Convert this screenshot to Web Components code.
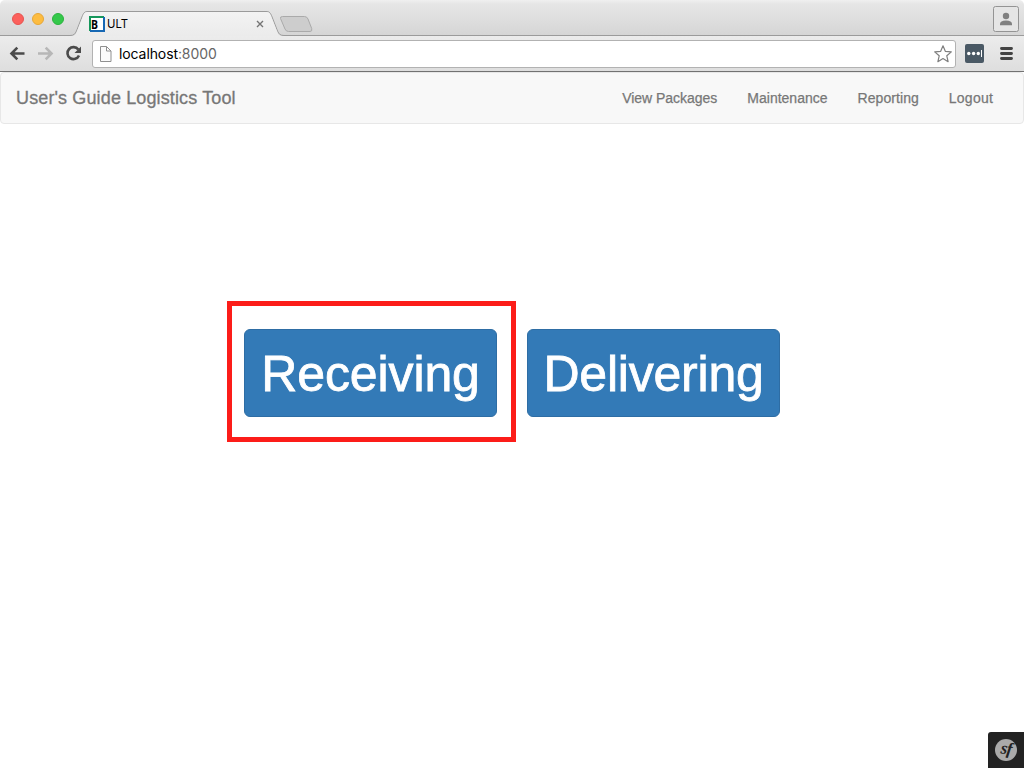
<!DOCTYPE html>
<html lang="en">
<head>
<meta charset="utf-8">
<title>ULT</title>
<style>
html,body{margin:0;height:100%;overflow:hidden;background:#fff}
body{font-family:"Liberation Sans",Arial,sans-serif}
</style>
</head>
<body>
<browser-window>
  <browser-tabs slot="chrome">ULT</browser-tabs>
  <browser-toolbar slot="chrome"><span slot="host">localhost</span><span slot="port">:8000</span></browser-toolbar>
  <site-navbar>
    <span slot="brand">User's Guide Logistics Tool</span>
    <nav-item style="letter-spacing:-.02px">View Packages</nav-item>
    <nav-item>Maintenance</nav-item>
    <nav-item style="letter-spacing:.07px">Reporting</nav-item>
    <nav-item style="letter-spacing:.22px">Logout</nav-item>
  </site-navbar>
  <action-row>
    <action-button highlighted style="--track:-.1px">Receiving</action-button>
    <action-button style="--track:-.22px">Delivering</action-button>
  </action-row>
  <debug-badge slot="overlay">sf</debug-badge>
</browser-window>
<script>
function define(name, markup) {
  customElements.define(name, class extends HTMLElement {
    constructor() {
      super();
      const t = document.createElement('template');
      t.innerHTML = markup;
      this.attachShadow({mode: 'open'}).appendChild(t.content.cloneNode(true));
    }
  });
}

define('browser-window', `
<style>
:host{display:flex;flex-direction:column;width:1024px;height:768px;background:#fff;position:relative;overflow:hidden}
main{flex:1;display:flex;flex-direction:column}
</style>
<slot name="chrome"></slot><main><slot></slot></main><slot name="overlay"></slot>`);

define('browser-tabs', `
<style>
:host{display:block;height:36px;position:relative;background:linear-gradient(#f0f0f0,#e6e6e6 4px,#d5d5d5);border-radius:5px 5px 0 0;font-family:Inter,sans-serif}
.shape{position:absolute;inset:0;display:block}
.row{position:relative;display:flex;align-items:center;height:36px}
.lights{display:flex;gap:8px;padding-left:12px;width:77px;box-sizing:border-box}
.lights i{width:12px;height:12px;border-radius:50%;box-sizing:border-box;margin-top:2px}
.fav{display:block;margin:12px 0 0 12px}
.title{font-size:11.3px;line-height:14px;margin:12px 0 0 2px;color:#000;flex:1}
.user{width:26px;height:26px;margin:1px 5px 0 0}
</style>
<svg class="shape" width="1024" height="36">
<defs><linearGradient id="t" x2="0" y2="1"><stop stop-color="#f3f3f3"/><stop offset="1" stop-color="#ebebeb"/></linearGradient></defs>
<path d="M0 35.5H70C74 35.5 75 34 76.5 31L82.5 15.500C84 12.200 85 11.500 88 11.500H266C269 11.500 270 12.200 271.500 15.500L277.500 31C279 34 280 35.500 284 35.500H1024" fill="none" stroke="#9b9b9b"/>
<path d="M71 36C74.500 36 76 34 77 31L83 16C84.500 12.500 85.500 12 88 12H266C268.500 12 269.500 12.500 271 16L277 31C278 34 279.500 36 283 36Z" fill="url(#t)"/>
<path d="M282.500 16.500H304.500Q307 16.500 308 19L311.700 28.500Q312.500 31.500 310 31.500H288.500Q286 31.500 285 29L280.500 18.500Q280 16.500 282.500 16.500Z" fill="#cdcdcd" stroke="#aaa"/>
<path d="M257 21L263 27M263 21L257 27" stroke="#747474" stroke-width="1.400"/>
</svg>
<div class="row">
<div class="lights"><i style="background:#fc605c;border:1px solid #e65450"></i><i style="background:#fdbc40;border:1px solid #e6a738"></i><i style="background:#34c84a;border:1px solid #2bb23e"></i></div>
<svg class="fav" width="16" height="16"><path d="M1 15V1H15" fill="none" stroke="#16975b" stroke-width="2"/><path d="M1 15H15V1" fill="none" stroke="#1768b4" stroke-width="2"/><path d="M1 1V14" stroke="#16975b" stroke-width="2"/><path d="M2 2H14V14H2Z" fill="#fff"/><text x="2" y="13.300" font-family="Open Sans" font-weight="bold" font-size="11.500" fill="#000" textLength="7" lengthAdjust="spacingAndGlyphs">B</text></svg>
<span class="title"><slot></slot></span>
<svg class="user" viewBox="0 0 26 26"><rect x=".5" y=".5" width="25" height="25" rx="2" fill="#e5e5e5" stroke="#949494"/><circle cx="13" cy="10" r="3.200" fill="#808080"/><path d="M7 19.200V18Q7 14.500 13 14.500T19 18V19.200Z" fill="#808080"/></svg>
</div>`);

define('browser-toolbar', `
<style>
:host{display:flex;align-items:center;box-sizing:border-box;height:36px;background:linear-gradient(#ececec,#dedede);border-bottom:1px solid #727272;font-family:Inter,sans-serif}
.nav{display:block;width:92px;height:35px;flex:none}
.field{box-sizing:border-box;width:864px;height:28px;border:1px solid #b2b2b2;border-radius:3px;background:#fff;display:flex;align-items:center;padding:0 3px 0 6px}
.url{font-size:14px;line-height:18px;flex:1;margin-left:7px;color:#000;letter-spacing:-.1px}
.port{color:#666}
svg{display:block}
</style>
<svg class="nav" viewBox="0 0 92 35">
<g fill="none" stroke-width="2.600"><path d="M24.500 17.500H12M17.300 11.700L11.500 17.500L17.300 23.300" stroke="#4b4b4b"/><path d="M38 17.500H50.500M45.700 11.700L51.500 17.500L45.700 23.300" stroke="#b7b7b7"/><path d="M78.300 13.500A6 6 0 1 0 79 19.500" stroke="#4b4b4b"/></g><path d="M81 10.500V17H74.500Z" fill="#4b4b4b"/></svg>
<div class="field">
<svg width="13" height="16"><path d="M1.500 .5H7.500L12 5V15.500H1.500ZM7.500 .5V5H12" fill="#fbfbfb" stroke="#909090"/></svg>
<span class="url"><slot name="host"></slot><span class="port"><slot name="port"></slot></span></span>
<svg width="18" height="18" viewBox="0 0 18 18"><path d="M9 .8L11.300 6.300L17.300 6.900L12.800 10.800L14.100 16.700L9 13.600L3.900 16.700L5.200 10.800L.7 6.900L6.700 6.300Z" fill="#fff" stroke="#7f7f7f" stroke-width="1.200" stroke-linejoin="round"/></svg>
</div>
<svg width="19" height="19" style="margin-left:9px"><rect width="19" height="19" rx="2" fill="#4a5965"/><circle cx="3.800" cy="9.500" r="1.700" fill="#fff"/><circle cx="8.600" cy="9.500" r="1.700" fill="#fff"/><circle cx="13.300" cy="9.500" r="1.700" fill="#fff"/><path d="M16.500 6V13" stroke="#fff"/></svg>
<svg width="13" height="13" style="margin-left:16px"><path d="M1.500 1.500H11.500M1.500 6.500H11.500M1.500 11.500H11.500" stroke="#444" stroke-width="2.900" stroke-linecap="round"/></svg>`);

define('site-navbar', `
<style>
:host{display:flex;box-sizing:border-box;height:52px;border:1px solid #e7e7e7;border-radius:4px;background:#f8f8f8;color:#777;padding:0 15px;justify-content:space-between;align-items:flex-start}
.brand{font-size:18px;line-height:20px;padding-top:15px;letter-spacing:.13px;-webkit-text-stroke:.3px #777}
nav{display:flex}
</style>
<div class="brand"><slot name="brand"></slot></div><nav><slot></slot></nav>`);

define('nav-item', `
<style>:host{display:block;padding:15px;font-size:14px;line-height:20px;color:#777;-webkit-text-stroke:.25px #777}</style><slot></slot>`);

define('action-row', `
<style>:host{display:flex;align-items:flex-start;gap:11px;padding:177px 0 0 227px}</style><slot></slot>`);

define('action-button', `
<style>
:host{display:block;padding-top:28px}
:host([highlighted]){border:5px solid #fc1d19;padding:23px 14px 20px 12px}
button{display:block;width:253px;height:88px;box-sizing:border-box;margin:0;padding:2px 0 0;border:1px solid #2e6da4;border-radius:6px;background:#337ab7;color:#fff;font:50px/84px "Liberation Sans",Arial,sans-serif;letter-spacing:var(--track,0);white-space:nowrap;text-align:center;-webkit-text-stroke:.8px #fff}
</style><button><slot></slot></button>`);

define('debug-badge', `
<style>
:host{position:absolute;right:0;bottom:0;width:36px;height:36px;display:flex;align-items:center;justify-content:center;background:#222;border-radius:3px 0 0 0}
.disc{width:22px;height:22px;border-radius:50%;background:#aaa;color:#222;display:flex;align-items:center;justify-content:center;font:italic bold 17px/18px "Liberation Serif",serif;letter-spacing:-1px;padding-bottom:0}
.disc span{display:block;transform:translate(0,-1px) rotate(8deg)}
</style><div class="disc"><span><slot></slot></span></div>`);
</script>
</body>
</html>
